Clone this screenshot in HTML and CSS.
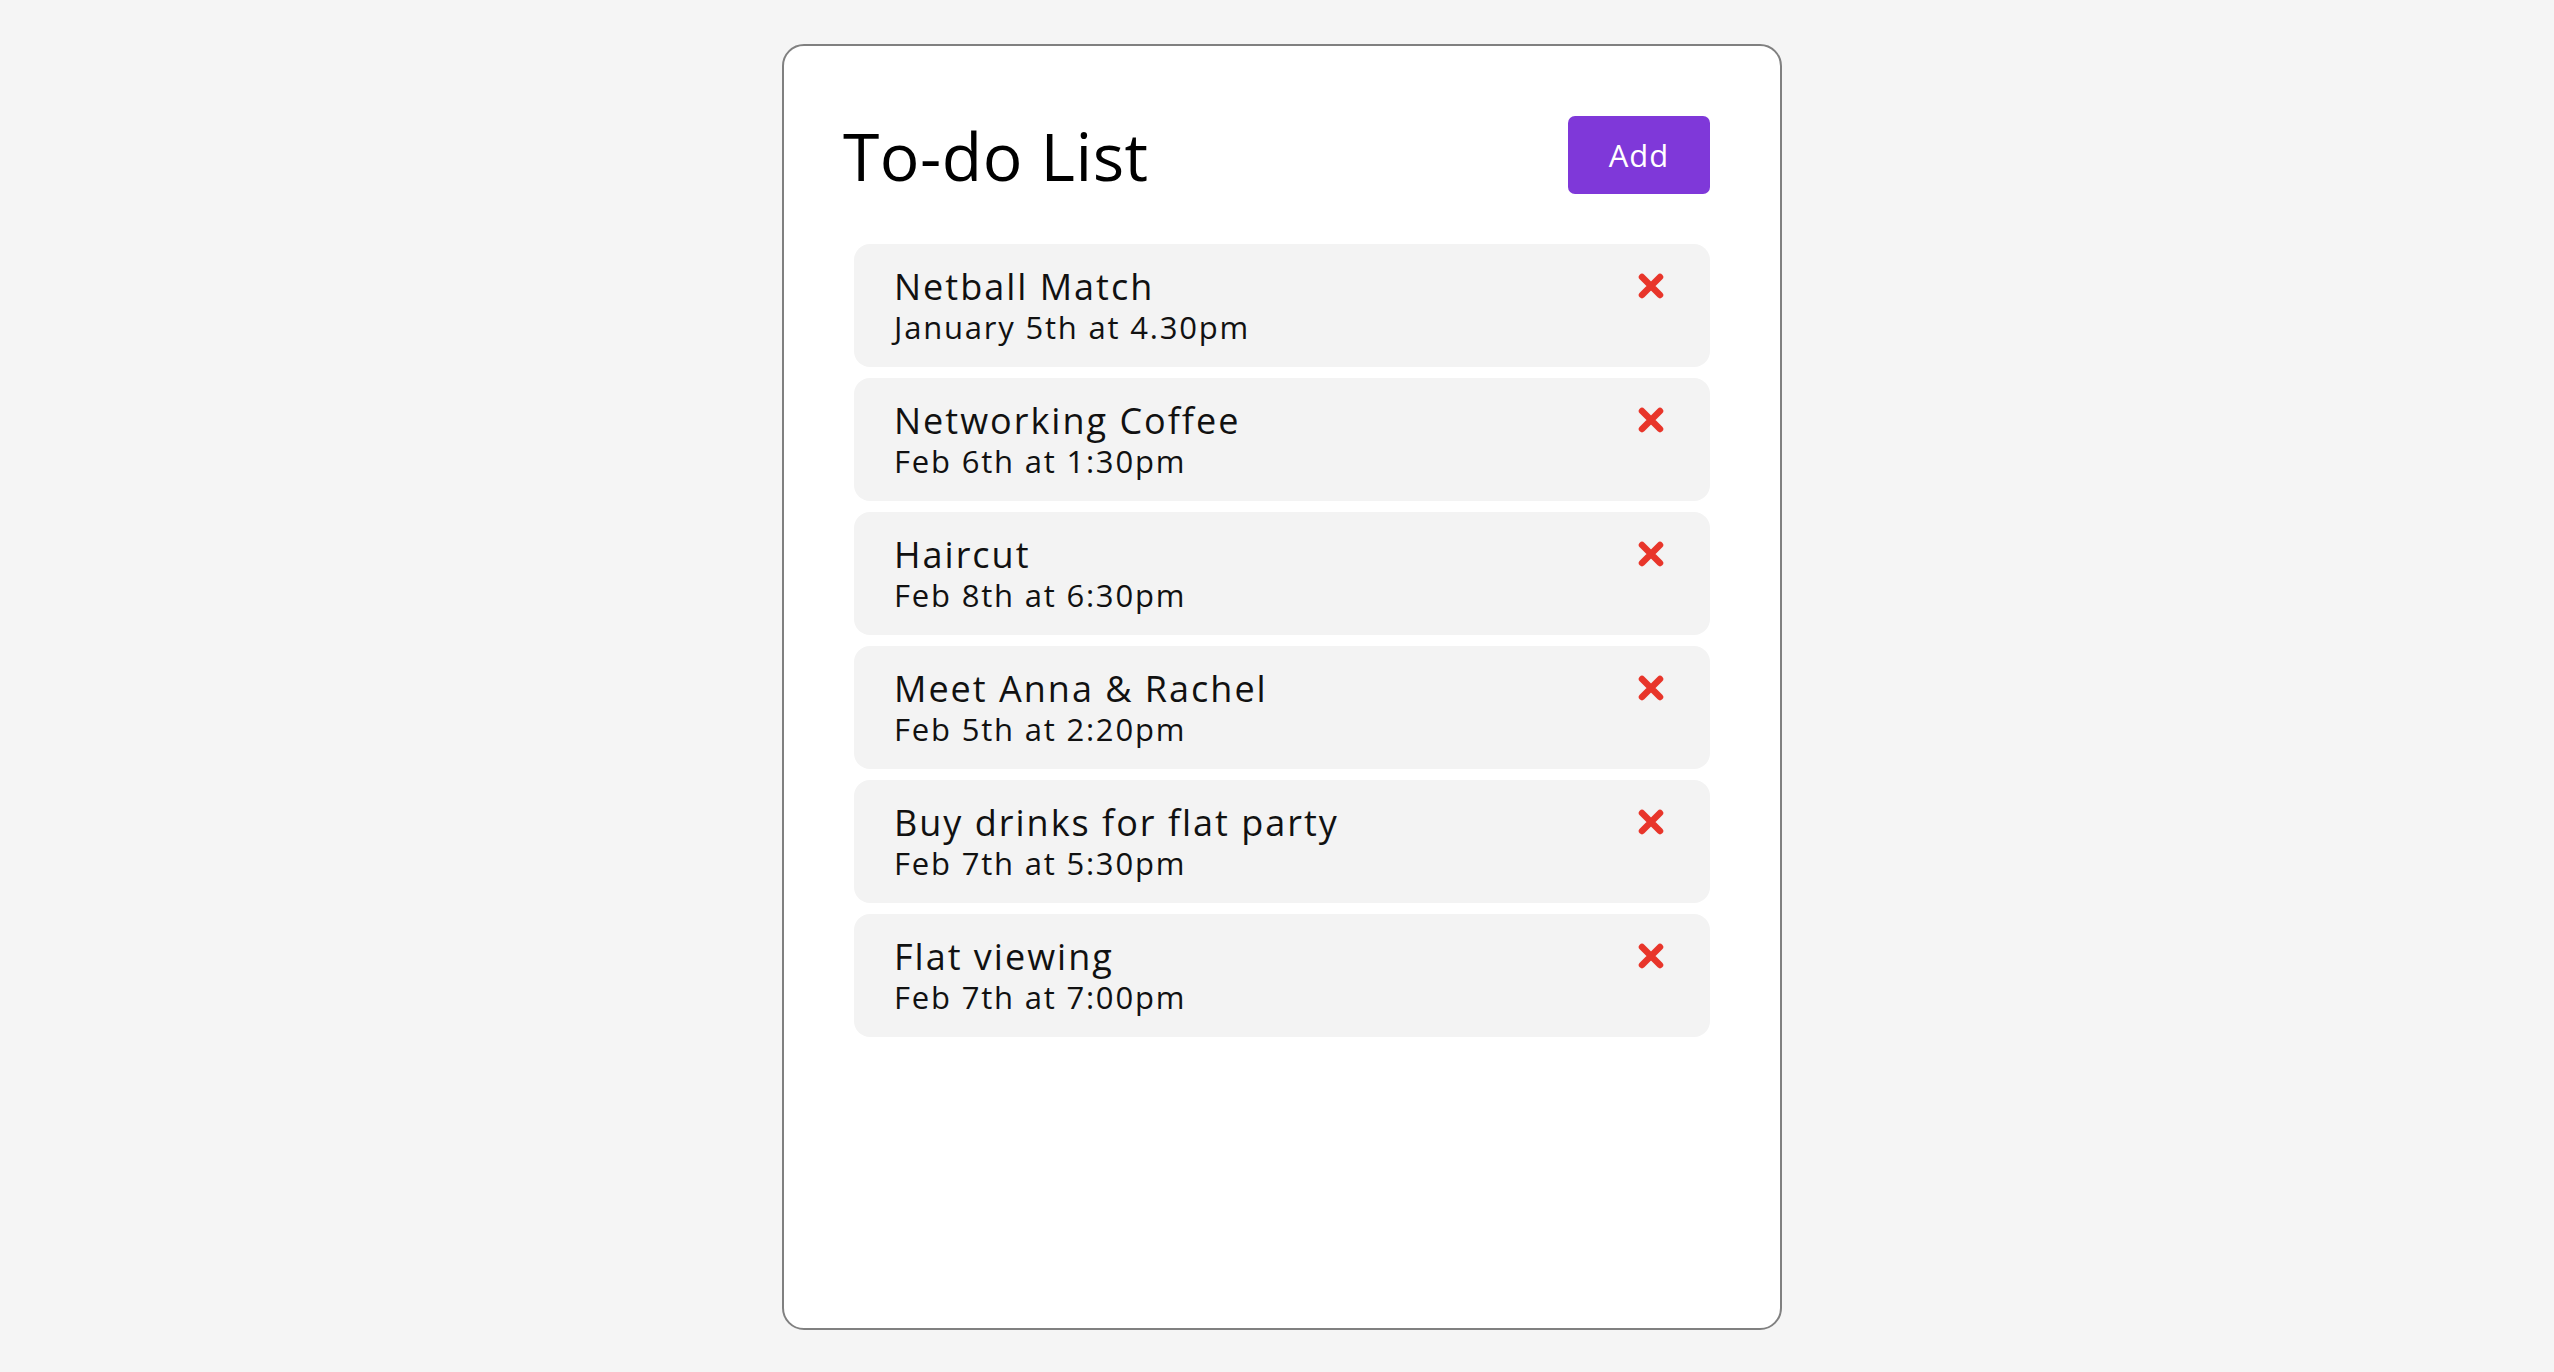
FILE: index.html
```html
<!DOCTYPE html>
<html>
<head>
<meta charset="utf-8">
<link rel="stylesheet" href="styles.css">
</head>
<body>
<main class="card">
  <header class="header">
    <h1 class="title">To-do List</h1>
    <button class="add-btn">Add</button>
  </header>
  <ul class="list">
    <li class="item"><div class="item-text"><div class="item-title">Netball Match</div><div class="item-date">January 5th at 4.30pm</div></div><span class="remove"><svg viewBox="0 0 26 26" width="26" height="26"><path d="M4 4L22 22M22 4L4 22" /></svg></span></li>
    <li class="item"><div class="item-text"><div class="item-title">Networking Coffee</div><div class="item-date">Feb 6th at 1:30pm</div></div><span class="remove"><svg viewBox="0 0 26 26" width="26" height="26"><path d="M4 4L22 22M22 4L4 22" /></svg></span></li>
    <li class="item"><div class="item-text"><div class="item-title">Haircut</div><div class="item-date">Feb 8th at 6:30pm</div></div><span class="remove"><svg viewBox="0 0 26 26" width="26" height="26"><path d="M4 4L22 22M22 4L4 22" /></svg></span></li>
    <li class="item"><div class="item-text"><div class="item-title">Meet Anna &amp; Rachel</div><div class="item-date">Feb 5th at 2:20pm</div></div><span class="remove"><svg viewBox="0 0 26 26" width="26" height="26"><path d="M4 4L22 22M22 4L4 22" /></svg></span></li>
    <li class="item"><div class="item-text"><div class="item-title">Buy drinks for flat party</div><div class="item-date">Feb 7th at 5:30pm</div></div><span class="remove"><svg viewBox="0 0 26 26" width="26" height="26"><path d="M4 4L22 22M22 4L4 22" /></svg></span></li>
    <li class="item"><div class="item-text"><div class="item-title">Flat viewing</div><div class="item-date">Feb 7th at 7:00pm</div></div><span class="remove"><svg viewBox="0 0 26 26" width="26" height="26"><path d="M4 4L22 22M22 4L4 22" /></svg></span></li>
  </ul>
</main>
</body>
</html>
```
FILE: styles.css
```css
* { box-sizing: border-box; }
html, body { margin: 0; padding: 0; }
body {
  background: #f5f5f5;
  font-family: "Open Sans", "Noto Sans", sans-serif;
  color: #111;
  height: 1372px;
}
.card {
  width: 1000px;
  height: 1286px;
  margin: 44px 0 0 782px;
  background: #fff;
  border: 2px solid #808080;
  border-radius: 22px;
  padding: 70px 70px 0 70px;
}
.header {
  display: flex;
  justify-content: space-between;
  align-items: center;
  height: 78px;
  margin-bottom: 50px;
}
.title {
  margin: 0 0 0 -11px;
  font-size: 66px;
  font-weight: 400;
  color: #000;
  line-height: 78px;
  letter-spacing: 0.5px;
}
.add-btn {
  width: 142px;
  height: 78px;
  border: none;
  border-radius: 7px;
  background: #7f38d9;
  color: #fff;
  font-family: inherit;
  font-size: 31px;
  letter-spacing: 1px;
  padding: 0;
}
.list {
  list-style: none;
  margin: 0;
  padding: 0;
  display: flex;
  flex-direction: column;
  gap: 11px;
}
.item {
  height: 123px;
  background: #f3f3f3;
  border-radius: 16px;
  display: flex;
  justify-content: space-between;
  align-items: flex-start;
  padding: 22px 46px 0 40px;
}
.item-title {
  font-size: 36px;
  line-height: 42px;
  letter-spacing: 2px;
}
.item-date {
  font-size: 31px;
  line-height: 38px;
  letter-spacing: 1.8px;
}
.remove {
  margin-top: 7px;
  width: 26px;
  height: 27px;
}
.remove svg path {
  stroke: #e8352a;
  stroke-width: 6.5;
  stroke-linecap: round;
  fill: none;
}
```
